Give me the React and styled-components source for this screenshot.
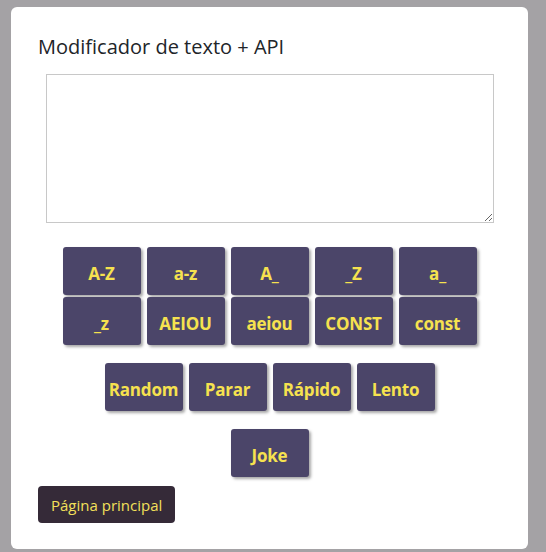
import React from 'react';
import styled, { createGlobalStyle } from 'styled-components';

const GlobalStyle = createGlobalStyle`
  html, body {
    margin: 0;
    padding: 0;
    background: #a4a2a5;
    font-family: "Open Sans", "Noto Sans", sans-serif;
  }
`;

const Page = styled.div`
  height: 552px;
  padding: 7px 18px 0 11px;
  box-sizing: border-box;
  overflow: hidden;
`;

const Card = styled.div`
  background: #ffffff;
  border-radius: 6px;
  height: 542px;
  padding: 26px 27px 0 27px;
  box-sizing: border-box;
`;

const Title = styled.h2`
  margin: 0;
  font-size: 20px;
  font-weight: 400;
  color: #212529;
  line-height: 28px;
`;

const Editor = styled.textarea`
  display: block;
  width: 448px;
  height: 149px;
  margin: 13px auto 0;
  box-sizing: border-box;
  border: 1px solid #c8c8c8;
  resize: both;
`;

const Group = styled.div`
  display: flex;
  flex-wrap: wrap;
  justify-content: center;
  column-gap: 6px;
  row-gap: 2px;
  width: ${p => p.$width}px;
  margin: ${p => p.$top}px auto 0;
`;

const ActionButton = styled.button`
  width: 78px;
  height: 48px;
  padding: 5px 0 0;
  border: none;
  border-radius: 3px;
  background: #4b4569;
  color: #f6e24f;
  font-family: "Open Sans", "Noto Sans", sans-serif;
  font-weight: 700;
  font-size: 17px;
  letter-spacing: -0.2px;
  box-shadow: 2px 2px 3px rgba(0, 0, 0, 0.35);
  white-space: nowrap;
  overflow: hidden;
`;

const HomeButton = styled.button`
  display: block;
  margin-top: 9px;
  height: 37px;
  padding: 0 13px;
  border: none;
  border-radius: 4px;
  background: #352a38;
  color: #f3e05a;
  font-family: "Open Sans", "Noto Sans", sans-serif;
  font-size: 15px;
`;

const caseButtons = ['A-Z', 'a-z', 'A_', '_Z', 'a_', '_z', 'AEIOU', 'aeiou', 'CONST', 'const'];
const speedButtons = ['Random', 'Parar', 'Rápido', 'Lento'];

export default function App() {
  return (
    <>
      <GlobalStyle />
      <Page>
        <Card>
          <Title>Modificador de texto + API</Title>
          <Editor />
          <Group $top={24} $width={420}>
            {caseButtons.map(b => (
              <ActionButton key={b}>{b}</ActionButton>
            ))}
          </Group>
          <Group $top={18} $width={340}>
            {speedButtons.map(b => (
              <ActionButton key={b}>{b}</ActionButton>
            ))}
          </Group>
          <Group $top={18} $width={100}>
            <ActionButton>Joke</ActionButton>
          </Group>
          <HomeButton>Página principal</HomeButton>
        </Card>
      </Page>
    </>
  );
}
